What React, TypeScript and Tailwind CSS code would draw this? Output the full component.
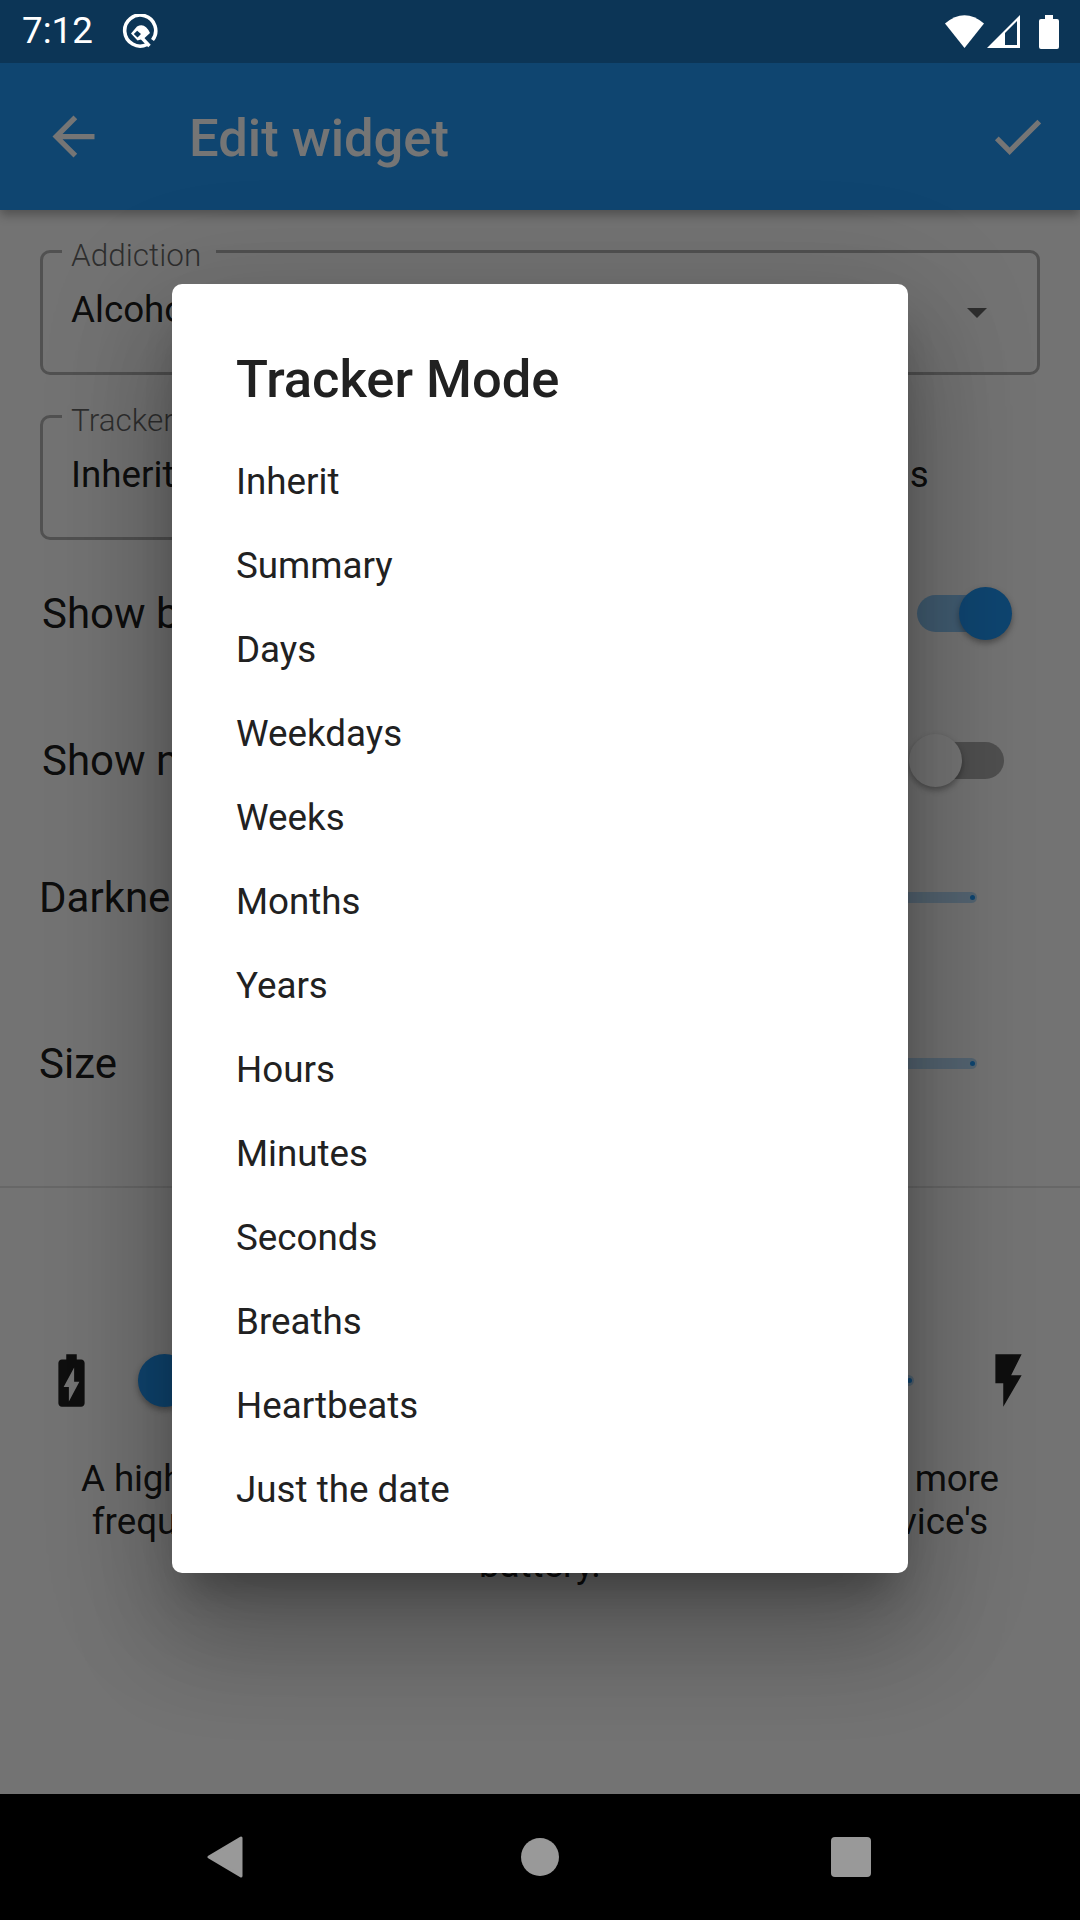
const trackerModes = [
  'Inherit',
  'Summary',
  'Days',
  'Weekdays',
  'Weeks',
  'Months',
  'Years',
  'Hours',
  'Minutes',
  'Seconds',
  'Breaths',
  'Heartbeats',
  'Just the date',
]

function StatusBar() {
  return (
    <div className="flex h-[63px] shrink-0 items-center justify-between bg-[#0c3556] pl-[22px] pr-[21px] text-white">
      <div className="flex items-center gap-[30px]">
        <span className="w-[70px] text-[36.75px] leading-none">7:12</span>
        <svg viewBox="0 0 36 36" className="h-[36px] w-[36px]">
          <path d="M25 30.5A15.5 15.5 0 1 1 30.5 26" fill="none" stroke="white" strokeWidth="3.6" />
          <path
            fillRule="evenodd"
            fill="white"
            d="M9 19.5 15 12.5Q23 8 28 19L22 24.5 15.5 26.5ZM15.2 16.8 11.8 20 15.5 23.6 19 20Z"
          />
          <path d="M19 23 27.5 32" fill="none" stroke="white" strokeWidth="3.4" />
        </svg>
      </div>
      <div className="flex items-center">
        <svg viewBox="0 0 39 33" className="h-[33px] w-[39px]">
          <path d="M19.5 33 0 8.5Q19.5 -8 39 8.5Z" fill="white" />
        </svg>
        <svg viewBox="0 0 33 33" className="ml-[3px] h-[33px] w-[33px]">
          <path d="M33 0V33H0Z" fill="white" />
          <path d="M18 18 30 6V30H18Z" fill="#0c3556" />
        </svg>
        <svg viewBox="0 0 20 34" className="ml-[19px] h-[34px] w-[20px]">
          <path d="M6 0H14V4H18Q20 4 20 6V32Q20 34 18 34H2Q0 34 0 32V6Q0 4 2 4H6Z" fill="white" />
        </svg>
      </div>
    </div>
  )
}

function AppBar() {
  return (
    <div className="relative flex h-[147px] items-center bg-[#2196f3] pl-[42px] pr-[31px] text-white shadow-[0_5px_10px_rgba(0,0,0,0.3)]">
      <svg viewBox="0 0 24 24" className="h-[63px] w-[63px]" fill="white">
        <path d="M20 11H7.83l5.59-5.59L12 4l-8 8 8 8 1.41-1.41L7.83 13H20v-2z" />
      </svg>
      <span className="ml-[84px] mt-[4px] text-[52.5px] font-medium leading-none">Edit widget</span>
      <svg viewBox="0 0 24 24" className="ml-auto h-[63px] w-[63px]" fill="white">
        <path d="M9 16.17L4.83 12l-1.42 1.41L9 19 21 7l-1.41-1.41z" />
      </svg>
    </div>
  )
}

function OutlinedField({
  label,
  value,
  arrow,
  className,
}: {
  label: string
  value: string
  arrow?: boolean
  className: string
}) {
  return (
    <div
      className={`relative ml-[40px] flex h-[125px] items-center rounded-[10px] border-[3px] border-[#b0b0b0] pb-[5px] pl-[28px] pr-[50px] ${className}`}
    >
      <span className="absolute left-[19px] top-[-19px] bg-[#fafafa] pl-[9px] pr-[15px] text-[31.5px] font-light leading-[44px] text-black/60">
        {label}
      </span>
      <span className="whitespace-nowrap text-[36.75px] leading-none text-black/90">{value}</span>
      {arrow && (
        <svg viewBox="0 0 20 10" className="ml-auto mt-[5px] h-[10px] w-[20px]">
          <path d="M0 0H20L10 10Z" fill="black" fillOpacity="0.6" />
        </svg>
      )}
    </div>
  )
}

function SwitchRow({ label, on, className }: { label: string; on: boolean; className: string }) {
  return (
    <div className={`flex h-[74px] items-center justify-between pl-[42px] pr-[68px] ${className}`}>
      <span className="mt-[2px] text-[42px] leading-none text-black/90">{label}</span>
      <div className="relative flex h-[53px] w-[103px] items-center justify-center">
        <div className={`h-[37px] w-[87px] rounded-full ${on ? 'bg-[#2196f3]/50' : 'bg-[#acacac]'}`} />
        <div
          className={`absolute top-0 h-[53px] w-[53px] rounded-full shadow-[0_3px_6px_rgba(0,0,0,0.35)] ${
            on ? 'right-0 bg-[#2196f3]' : 'left-0 bg-white'
          }`}
        />
      </div>
    </div>
  )
}

function SliderRow({ label, className }: { label: string; className: string }) {
  return (
    <div className={`flex h-[74px] items-center justify-between pl-[39px] pr-[103px] ${className}`}>
      <span className="mt-[2px] text-[42px] leading-none text-black/90">{label}</span>
      <div className="relative h-[11px] w-[500px] rounded-full bg-[#2196f3]/30">
        <div className="absolute right-[2px] top-[3px] h-[5px] w-[5px] rounded-full bg-[#2196f3]" />
      </div>
    </div>
  )
}

function FrequencyRow() {
  return (
    <div className="mt-[161px] flex h-[63px] items-center pl-[40px] pr-[40px]">
      <svg viewBox="0 0 24 24" className="h-[63px] w-[63px] shrink-0" fill="black" fillOpacity="0.87">
        <path d="M15.67 4H14V2h-4v2H8.33C7.6 4 7 4.6 7 5.33v15.33C7 21.4 7.6 22 8.33 22h7.33c.74 0 1.34-.6 1.34-1.33V5.33C17 4.6 16.4 4 15.67 4zM11 20v-5.5H9L13 7v5.5h2L11 20z" />
      </svg>
      <div className="relative ml-[35px] mr-[63px] h-[11px] flex-1 rounded-full bg-[#2196f3]/30">
        <div className="absolute left-0 top-[-21px] h-[53px] w-[53px] rounded-full bg-[#2196f3] shadow-[0_3px_6px_rgba(0,0,0,0.35)]" />
        <div className="absolute right-[2px] top-[3px] h-[5px] w-[5px] rounded-full bg-[#2196f3]" />
      </div>
      <svg viewBox="0 0 24 24" className="h-[63px] w-[63px] shrink-0" fill="black" fillOpacity="0.87">
        <path d="M7 2v11h3v9l7-12h-4l4-8z" />
      </svg>
    </div>
  )
}

function TrackerModeDialog() {
  return (
    <div className="absolute left-[172px] top-[221px] h-[1289px] w-[736px] rounded-[10px] bg-white pl-[64px] pt-[64px] text-[#212121] shadow-[0_29px_39px_-18px_rgba(0,0,0,0.3),0_63px_100px_8px_rgba(0,0,0,0.2),0_24px_121px_21px_rgba(0,0,0,0.12)]">
      <h2 className="mb-[29px] text-[52.5px] font-medium leading-[63px]">Tracker Mode</h2>
      {trackerModes.map((mode) => (
        <div key={mode} className="flex h-[84px] items-center text-[36.75px] leading-none">
          {mode}
        </div>
      ))}
    </div>
  )
}

function NavBar() {
  return (
    <div className="flex h-[126px] shrink-0 items-center bg-black pl-[207px]">
      <svg viewBox="0 0 36 42" className="h-[42px] w-[36px]">
        <path d="M34 2V40L2 21Z" fill="#999" stroke="#999" strokeWidth="3" strokeLinejoin="round" />
      </svg>
      <div className="ml-[278px] h-[38px] w-[38px] rounded-full bg-[#999]" />
      <div className="ml-[272px] h-[40px] w-[40px] rounded-[4px] bg-[#999]" />
    </div>
  )
}

export default function App() {
  return (
    <div className="flex h-[1920px] w-[1080px] flex-col overflow-hidden bg-[#fafafa] font-['Roboto',sans-serif]">
      <StatusBar />
      <div className="relative flex flex-1 flex-col overflow-hidden">
        <AppBar />
        <OutlinedField label="Addiction" value="Alcohol" arrow className="mr-[40px] mt-[40px]" />
        <OutlinedField
          label="Tracker Mode"
          value="Inherit your tracker mode from the addiction settings"
          className="mt-[40px] w-[780px]"
        />
        <SwitchRow label="Show background" on className="mt-[36px]" />
        <SwitchRow label="Show name" on={false} className="mt-[73px]" />
        <SliderRow label="Darkness" className="mt-[63px]" />
        <SliderRow label="Size" className="mt-[92px]" />
        <div className="mt-[86px] h-[2px] bg-black/10" />
        <FrequencyRow />
        <p className="mt-[45px] text-center text-[36.75px] leading-[43px] text-black/90">
          <span className="tracking-[-0.14px]">A higher update frequency will update your widgets more</span>
          <br />
          frequently, but will also use much more of your device's
          <br />
          battery.
        </p>
        <div className="absolute inset-0 bg-black/54" />
        <TrackerModeDialog />
      </div>
      <NavBar />
    </div>
  )
}
